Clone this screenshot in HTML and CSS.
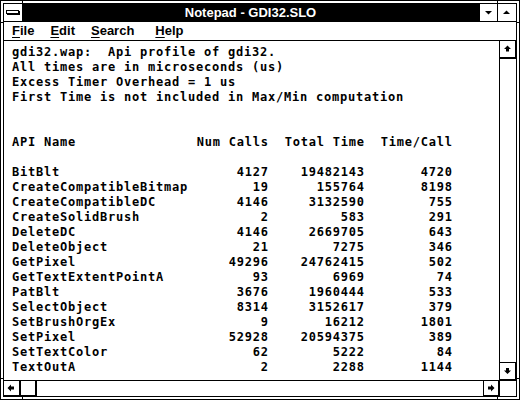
FILE: index.html
```html
<!DOCTYPE html>
<html>
<head>
<meta charset="utf-8">
<link rel="stylesheet" href="styles.css">
</head>
<body>
<div class="window">
  <span class="notch nv ntl"></span><span class="notch nv ntr"></span>
  <span class="notch nv nbl"></span><span class="notch nv nbr"></span>
  <span class="notch nh nlt"></span><span class="notch nh nrt"></span>
  <span class="notch nh nlb"></span><span class="notch nh nrb"></span>
  <div class="inner">
    <div class="titlebar">
      <div class="sysmenu">
        <svg width="18" height="17" viewBox="0 0 18 17"><rect x="2.5" y="6.5" width="12" height="3" fill="#fff" stroke="#000"/><rect x="3" y="10" width="13" height="1" fill="#000"/><rect x="15" y="7" width="1" height="4" fill="#000"/></svg>
      </div>
      <div class="title">Notepad - GDI32.SLO</div>
      <div class="tbtn tmin">
        <svg width="17" height="17" viewBox="0 0 17 17"><path d="M5 7 L12 7 L8.5 10.5 Z" fill="#000"/></svg>
      </div>
      <div class="tbtn tmax">
        <svg width="17" height="17" viewBox="0 0 17 17"><path d="M5 10 L12 10 L8.5 6.5 Z" fill="#000"/></svg>
      </div>
    </div>
    <div class="menubar">
      <span class="mitem"><u>F</u>ile</span>
      <span class="mitem"><u>E</u>dit</span>
      <span class="mitem"><u>S</u>earch</span>
      <span class="mitem mhelp"><u>H</u>elp</span>
    </div>
    <div class="body">
      <div class="main">
        <div class="editor">
          <div class="line">gdi32.wap:  Api profile of gdi32.</div>
          <div class="line">All times are in microseconds (us)</div>
          <div class="line">Excess Timer Overhead = 1 us</div>
          <div class="line">First Time is not included in Max/Min computation</div>
          <div class="table">
            <div class="row head"><span>API Name</span><span class="num">Num Calls</span><span class="num">Total Time</span><span class="num">Time/Call</span></div>
            <div class="data">
              <div class="row"><span>BitBlt</span><span class="num">4127</span><span class="num">19482143</span><span class="num">4720</span></div>
              <div class="row"><span>CreateCompatibleBitmap</span><span class="num">19</span><span class="num">155764</span><span class="num">8198</span></div>
              <div class="row"><span>CreateCompatibleDC</span><span class="num">4146</span><span class="num">3132590</span><span class="num">755</span></div>
              <div class="row"><span>CreateSolidBrush</span><span class="num">2</span><span class="num">583</span><span class="num">291</span></div>
              <div class="row"><span>DeleteDC</span><span class="num">4146</span><span class="num">2669705</span><span class="num">643</span></div>
              <div class="row"><span>DeleteObject</span><span class="num">21</span><span class="num">7275</span><span class="num">346</span></div>
              <div class="row"><span>GetPixel</span><span class="num">49296</span><span class="num">24762415</span><span class="num">502</span></div>
              <div class="row"><span>GetTextExtentPointA</span><span class="num">93</span><span class="num">6969</span><span class="num">74</span></div>
              <div class="row"><span>PatBlt</span><span class="num">3676</span><span class="num">1960444</span><span class="num">533</span></div>
              <div class="row"><span>SelectObject</span><span class="num">8314</span><span class="num">3152617</span><span class="num">379</span></div>
              <div class="row"><span>SetBrushOrgEx</span><span class="num">9</span><span class="num">16212</span><span class="num">1801</span></div>
              <div class="row"><span>SetPixel</span><span class="num">52928</span><span class="num">20594375</span><span class="num">389</span></div>
              <div class="row"><span>SetTextColor</span><span class="num">62</span><span class="num">5222</span><span class="num">84</span></div>
              <div class="row"><span>TextOutA</span><span class="num">2</span><span class="num">2288</span><span class="num">1144</span></div>
            </div>
          </div>
        </div>
        <div class="vscroll">
          <div class="sbtn vup">
            <svg width="16" height="16" viewBox="0 0 16 16"><path d="M7.5 4.5 L11 8 L9 8 L9 10.5 L6 10.5 L6 8 L4 8 Z" fill="#000"/></svg>
          </div>
          <div class="vtrack"></div>
          <div class="sbtn vdown">
            <svg width="16" height="16" viewBox="0 0 16 16"><path d="M7.5 11 L11 7.5 L9 7.5 L9 5 L6 5 L6 7.5 L4 7.5 Z" fill="#000"/></svg>
          </div>
        </div>
      </div>
      <div class="hscroll">
        <div class="sbtn hleft">
          <svg width="15" height="15" viewBox="0 0 15 15"><path d="M3.5 7 L7 3.5 L7 5.5 L10 5.5 L10 8.5 L7 8.5 L7 10.5 Z" fill="#000"/></svg>
        </div>
        <div class="sbtn hthumb"></div>
        <div class="htrack"></div>
        <div class="sbtn hright">
          <svg width="15" height="15" viewBox="0 0 15 15"><path d="M10.5 7 L7 3.5 L7 5.5 L4 5.5 L4 8.5 L7 8.5 L7 10.5 Z" fill="#000"/></svg>
        </div>
        <div class="corner"></div>
      </div>
    </div>
  </div>
</div>
</body>
</html>
```

FILE: styles.css
```css
html, body {
  margin: 0;
  padding: 0;
  background: #fff;
}

.window {
  position: relative;
  width: 520px;
  height: 400px;
  box-sizing: border-box;
  border: 1px solid #000;
  padding: 2px;
  background: #fff;
}

.notch {
  position: absolute;
  background: #000;
}
.nv { width: 1px; height: 3px; }
.nh { width: 3px; height: 1px; }
.ntl { left: 21px; top: 0; }
.ntr { left: 496px; top: 0; }
.nbl { left: 21px; bottom: 0; }
.nbr { left: 496px; bottom: 0; }
.nlt { left: 0; top: 21px; }
.nrt { right: 0; top: 21px; }
.nlb { left: 0; top: 377px; }
.nrb { right: 0; top: 377px; }

.inner {
  height: 100%;
  box-sizing: border-box;
  border: 1px solid #000;
  display: flex;
  flex-direction: column;
  background: #fff;
}

.titlebar {
  display: flex;
  height: 18px;
  box-sizing: border-box;
  border-bottom: 1px solid #000;
  flex: none;
}
.sysmenu {
  width: 18px;
  background: #fff;
  display: flex;
}
.title {
  flex: 1;
  background: #000;
  color: #fff;
  font-family: "Liberation Sans", Arial, sans-serif;
  font-weight: bold;
  font-size: 13px;
  line-height: 17px;
  text-align: center;
}
.tbtn {
  width: 17px;
  background: #fff;
  border-left: 1px solid #000;
  display: flex;
}
.tmax { width: 18px; }

.menubar {
  flex: none;
  height: 19px;
  box-sizing: border-box;
  border-bottom: 1px solid #000;
  display: flex;
  font-family: "Liberation Sans", Arial, sans-serif;
  font-weight: bold;
  font-size: 13px;
  line-height: 18px;
  color: #000;
}
.mitem {
  padding: 0 8px;
}
.mhelp {
  margin-left: 5px;
}
.mitem u {
  text-decoration-thickness: 1px;
  text-underline-offset: 2px;
}

.body {
  flex: 1;
  display: flex;
  flex-direction: column;
  min-height: 0;
}
.main {
  flex: 1;
  display: flex;
  min-height: 0;
}
.editor {
  flex: 1;
  padding: 4px 0 0 8px;
  overflow: hidden;
  font-family: "DejaVu Sans Mono", monospace;
  font-weight: bold;
  font-size: 12px;
  letter-spacing: 0.776px;
  line-height: 15px;
  color: #000;
}
.line {
  height: 15px;
  white-space: pre;
}
.table {
  margin-top: 30px;
}
.data {
  margin-top: 15px;
}
.row {
  display: grid;
  grid-template-columns: 184px 72px 96px 88px;
  height: 15px;
  white-space: nowrap;
}
.num {
  text-align: right;
  margin-right: -0.776px;
}

.vscroll {
  width: 17px;
  box-sizing: border-box;
  border-left: 1px solid #000;
  display: flex;
  flex-direction: column;
}
.sbtn {
  background: #fff;
  box-shadow: inset -1px -1px 0 #000;
  display: flex;
  flex: none;
}
.vup {
  height: 17px;
  border-bottom: 1px solid #000;
}
.vtrack {
  flex: 1;
}
.vdown {
  height: 17px;
  border-top: 1px solid #000;
}

.hscroll {
  flex: none;
  height: 16px;
  box-sizing: border-box;
  border-top: 1px solid #000;
  display: flex;
}
.hleft {
  width: 16px;
  border-right: 1px solid #000;
}
.hthumb {
  width: 15px;
  border-right: 1px solid #000;
}
.htrack {
  flex: 1;
}
.hright {
  width: 15px;
  border-left: 1px solid #000;
}
.corner {
  width: 17px;
  box-sizing: border-box;
  border-left: 1px solid #000;
}
```
